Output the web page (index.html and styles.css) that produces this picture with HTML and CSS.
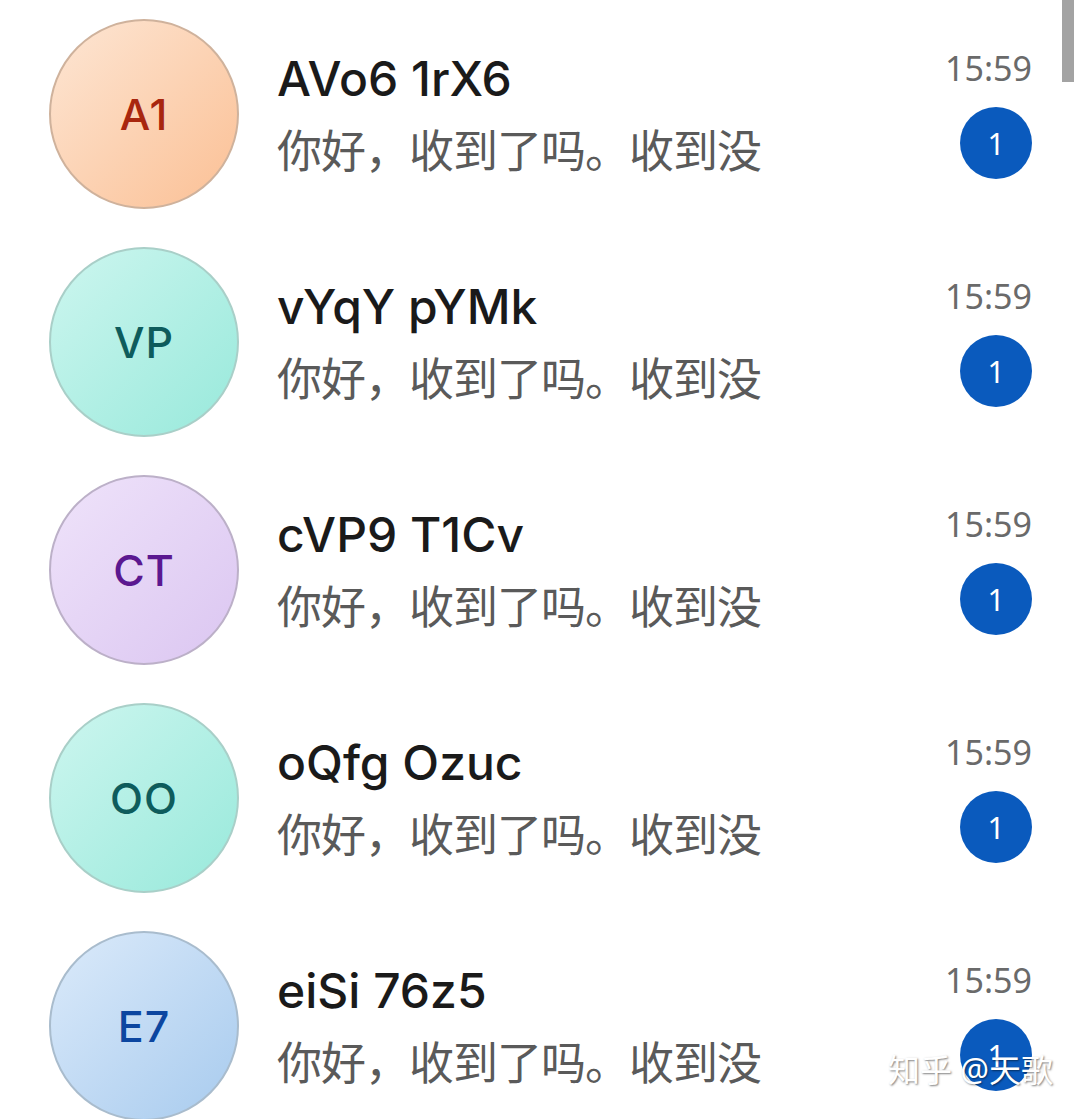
FILE: index.html
```html
<!DOCTYPE html>
<html lang="zh-CN">
<head>
    <meta charset="UTF-8">
    <title>消息</title>
    <link rel="stylesheet" href="styles.css">
</head>
<body>
    <div class="scrollbar"></div>
    <ul class="chat-list">
        <li class="chat">
            <div class="avatar orange">A1</div>
            <div class="chat-body">
                <div class="name">AVo6 1rX6</div>
                <div class="preview">你好，收到了吗。收到没</div>
            </div>
            <div class="chat-meta">
                <span class="time">15:59</span>
                <span class="badge">1</span>
            </div>
        </li>
        <li class="chat">
            <div class="avatar teal">VP</div>
            <div class="chat-body">
                <div class="name">vYqY pYMk</div>
                <div class="preview">你好，收到了吗。收到没</div>
            </div>
            <div class="chat-meta">
                <span class="time">15:59</span>
                <span class="badge">1</span>
            </div>
        </li>
        <li class="chat">
            <div class="avatar purple">CT</div>
            <div class="chat-body">
                <div class="name">cVP9 T1Cv</div>
                <div class="preview">你好，收到了吗。收到没</div>
            </div>
            <div class="chat-meta">
                <span class="time">15:59</span>
                <span class="badge">1</span>
            </div>
        </li>
        <li class="chat">
            <div class="avatar teal">OO</div>
            <div class="chat-body">
                <div class="name">oQfg Ozuc</div>
                <div class="preview">你好，收到了吗。收到没</div>
            </div>
            <div class="chat-meta">
                <span class="time">15:59</span>
                <span class="badge">1</span>
            </div>
        </li>
        <li class="chat">
            <div class="avatar blue">E7</div>
            <div class="chat-body">
                <div class="name">eiSi 76z5</div>
                <div class="preview">你好，收到了吗。收到没</div>
            </div>
            <div class="chat-meta">
                <span class="time">15:59</span>
                <span class="badge">1</span>
            </div>
        </li>
    </ul>
    <div class="watermark">知乎 @天歌</div>
</body>
</html>
```

FILE: styles.css
```css
body {
    margin: 0;
    background-color: #fff;
    font-family: "Noto Sans", "Noto Sans CJK SC", sans-serif;
    overflow: hidden;
}
.scrollbar {
    position: absolute;
    top: 0;
    right: 6px;
    width: 12px;
    height: 82px;
    background-color: #a3a3a3;
}
.chat-list {
    list-style: none;
    margin: 0;
    padding: 0;
}
.chat {
    display: flex;
    align-items: flex-start;
    height: 228px;
    padding: 19px 48px 0 49px;
    box-sizing: border-box;
}
.avatar {
    flex: none;
    width: 190px;
    height: 190px;
    border-radius: 50%;
    box-sizing: border-box;
    border: 2px solid #c9c2bd;
    display: flex;
    justify-content: center;
    align-items: center;
    font-family: Inter, "Noto Sans", sans-serif;
    font-size: 43px;
    font-weight: 500;
    letter-spacing: 1px;
}
.avatar.orange {
    background: linear-gradient(135deg, #fde6d4, #fbc095);
    border-color: #cfb29c;
    color: #a8260e;
}
.avatar.teal {
    background: linear-gradient(135deg, #cdf6ef, #98e9db);
    border-color: #a9cfc8;
    color: #0e5c5c;
}
.avatar.purple {
    background: linear-gradient(135deg, #efe3fa, #dbc6f1);
    border-color: #bcb0c8;
    color: #5b1890;
}
.avatar.blue {
    background: linear-gradient(135deg, #dbeafa, #a8cbee);
    border-color: #a9bccd;
    color: #0c46a0;
}
.chat-body {
    flex: 1;
    margin-left: 38px;
    padding-top: 27px;
}
.name {
    font-family: Inter, "Noto Sans", sans-serif;
    font-size: 48px;
    font-weight: 500;
    line-height: 66px;
    color: #1a1a1a;
}
.preview {
    font-size: 45px;
    letter-spacing: -1px;
    line-height: 78px;
    color: #5a5a5a;
}
.chat-meta {
    display: flex;
    flex-direction: column;
    align-items: flex-end;
    padding-top: 28px;
}
.time {
    font-size: 34px;
    line-height: 42px;
    color: #6a6a6a;
}
.badge {
    width: 72px;
    height: 72px;
    margin-top: 18px;
    border-radius: 50%;
    background-color: #0a5abd;
    color: #fff;
    font-size: 30px;
    display: flex;
    justify-content: center;
    align-items: center;
}
.watermark {
    position: absolute;
    right: 27px;
    bottom: 28px;
    font-size: 32px;
    color: #fff;
    text-shadow: 1px 1px 2px rgba(0, 0, 0, 0.5);
}
```
